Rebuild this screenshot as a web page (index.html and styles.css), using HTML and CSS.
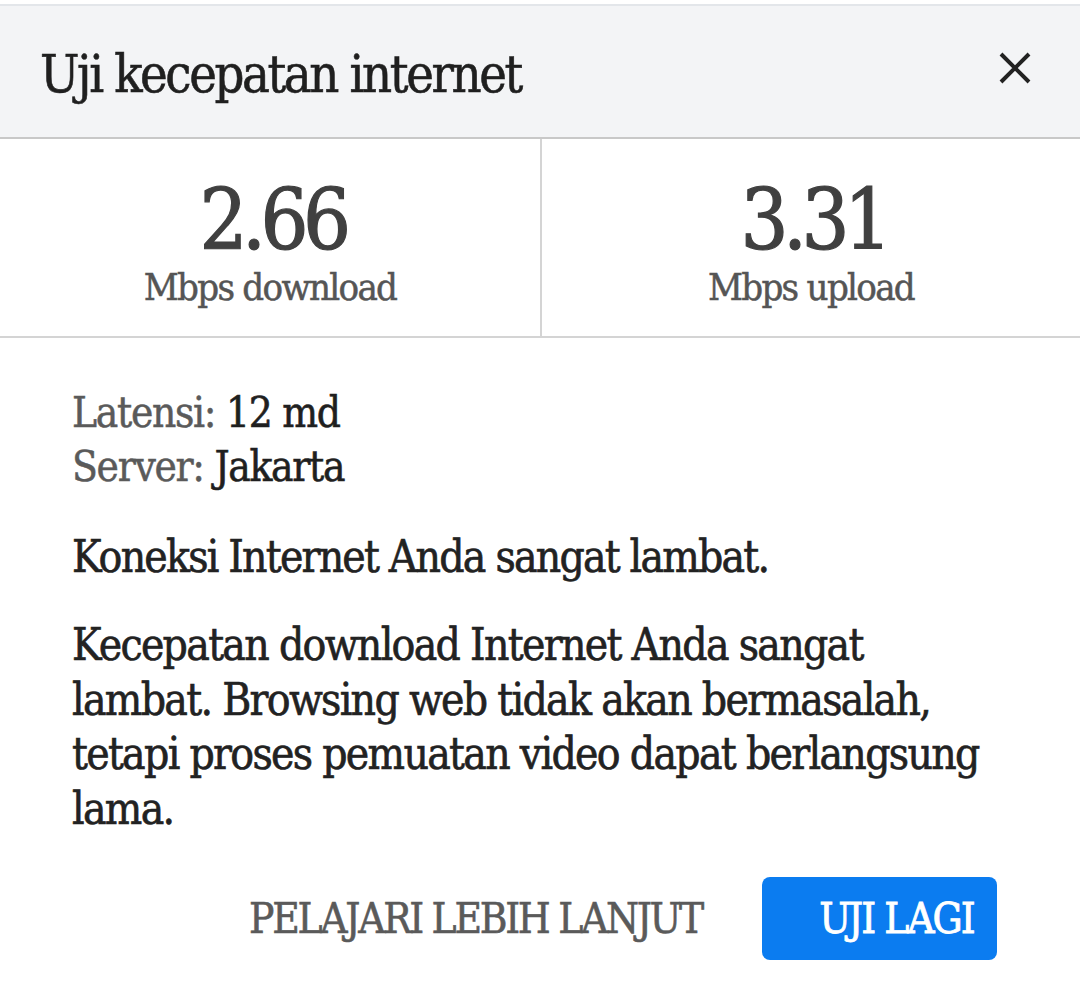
FILE: index.html
```html
<!DOCTYPE html>
<html lang="id">
<head>
<meta charset="utf-8">
<title>Uji kecepatan internet</title>
<link rel="stylesheet" href="styles.css">
</head>
<body>
<div class="dialog">
  <div class="header">
    <h1 class="title">Uji kecepatan internet</h1>
    <button class="close" aria-label="Tutup">
      <svg width="34" height="34" viewBox="0 0 34 34"><path d="M3 3 L31 31 M31 3 L3 31" stroke="#222" stroke-width="4" stroke-linecap="butt"/></svg>
    </button>
  </div>
  <div class="stats">
    <div class="stat">
      <div class="num">2.66</div>
      <div class="unit">Mbps download</div>
    </div>
    <div class="stat">
      <div class="num">3.31</div>
      <div class="unit">Mbps upload</div>
    </div>
  </div>
  <div class="body">
    <div class="meta">
      <div><span class="label">Latensi:</span> <span class="val">12 md</span></div>
      <div><span class="label">Server:</span> <span class="val">Jakarta</span></div>
    </div>
    <p class="summary">Koneksi Internet Anda sangat lambat.</p>
    <p class="detail">Kecepatan download Internet Anda sangat lambat. Browsing web tidak akan bermasalah, tetapi proses pemuatan video dapat berlangsung lama.</p>
  </div>
  <div class="actions">
    <button class="link">PELAJARI LEBIH LANJUT</button>
    <button class="primary">UJI LAGI</button>
  </div>
</div>
</body>
</html>
```

FILE: styles.css
```css
html, body {
  margin: 0;
  padding: 0;
  background: #ffffff;
}
body {
  font-family: "DejaVu Serif", "Liberation Serif", serif;
  font-stretch: condensed;
  color: #222;
  width: 1080px;
  height: 990px;
  overflow: hidden;
}
.dialog {
  padding-top: 4px;
}
.header {
  border-top: 2px solid #e3e6ea;
  background: #f3f4f6;
  height: 135px;
  border-bottom: 2px solid #c8c8c8;
  display: flex;
  align-items: center;
  justify-content: space-between;
  padding: 0 48px 0 40px;
  box-sizing: border-box;
}
.title {
  margin: 0;
  font-weight: normal;
  font-size: 52px;
  letter-spacing: -2.4px;
  color: #1f1f1f;
  line-height: 1;
  padding-top: 4px;
  -webkit-text-stroke: 0.6px #1f1f1f;
}
.close {
  border: 0;
  background: none;
  padding: 0;
  width: 34px;
  height: 34px;
  margin-top: -8px;
  display: flex;
}
.stats {
  display: grid;
  grid-template-columns: 540px 1fr;
  height: 197px;
  border-bottom: 2px solid #d4d4d4;
}
.stat {
  display: flex;
  flex-direction: column;
  align-items: center;
  padding-top: 50px;
}
.stat + .stat {
  border-left: 2px solid #d4d4d4;
}
.num {
  font-size: 84px;
  line-height: 62px;
  letter-spacing: -5.5px;
  padding-left: 5px;
  color: #404040;
  -webkit-text-stroke: 1.2px #404040;
}
.unit {
  margin-top: 16px;
  font-size: 38px;
  line-height: 40px;
  letter-spacing: -1.7px;
  color: #555;
  -webkit-text-stroke: 0.5px #555;
}
.body {
  padding: 48px 85px 0 72px;
}
.meta {
  font-size: 42px;
  line-height: 54px;
  letter-spacing: -1.3px;
}
.label {
  color: #5a5a5a;
  -webkit-text-stroke: 0.5px #5a5a5a;
}
.val {
  color: #1f1f1f;
  -webkit-text-stroke: 0.6px #1f1f1f;
}
.summary {
  margin: 36px 0 0;
  font-size: 44px;
  line-height: 54px;
  letter-spacing: -1.8px;
  -webkit-text-stroke: 0.6px #222;
}
.detail {
  margin: 34px 0 0;
  font-size: 44px;
  line-height: 54.5px;
  letter-spacing: -1.7px;
  -webkit-text-stroke: 0.6px #222;
}
.actions {
  display: flex;
  justify-content: flex-end;
  align-items: center;
  gap: 60px;
  padding: 41px 83px 0 0;
}
button {
  font-family: inherit;
  font-stretch: condensed;
}
.link {
  border: 0;
  background: none;
  font-size: 42px;
  color: #5a5a5a;
  padding: 0;
  letter-spacing: -2.3px;
  -webkit-text-stroke: 0.6px #5a5a5a;
}
.primary {
  border: 0;
  background: #0b7cf0;
  color: #fff;
  font-size: 42px;
  width: 235px;
  height: 83px;
  border-radius: 8px;
  letter-spacing: -2px;
  padding: 0 0 0 34px;
  -webkit-text-stroke: 0.8px #fff;
}
```
